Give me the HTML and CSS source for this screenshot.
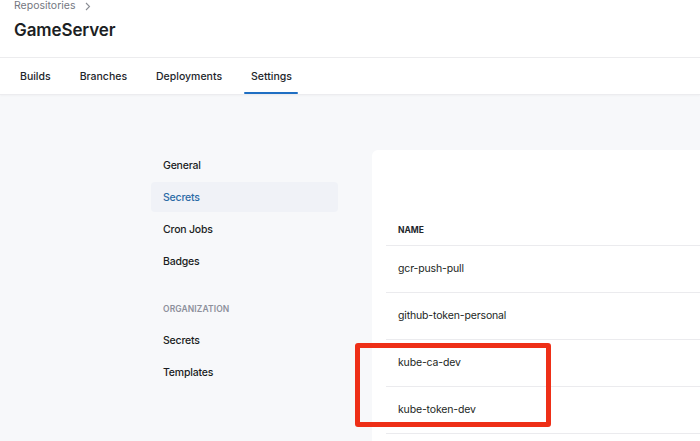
FILE: index.html
```html
<!DOCTYPE html>
<html>
<head>
<meta charset="utf-8">
<link rel="stylesheet" href="styles.css">
</head>
<body>
<header class="header">
  <div class="crumbs"><span>Repositories</span><svg class="sep" width="6" height="9" viewBox="0 0 6 9"><path d="M1 1l3.5 3.5L1 8" fill="none" stroke="#8a8d94" stroke-width="1.1"/></svg></div>
  <h1 class="title">GameServer</h1>
</header>
<nav class="tabs">
  <a class="tab">Builds</a>
  <a class="tab">Branches</a>
  <a class="tab">Deployments</a>
  <a class="tab active">Settings</a>
</nav>
<main class="main">
  <aside class="side">
    <div class="item">General</div>
    <div class="item active">Secrets</div>
    <div class="item">Cron Jobs</div>
    <div class="item">Badges</div>
    <div class="label">ORGANIZATION</div>
    <div class="item">Secrets</div>
    <div class="item">Templates</div>
  </aside>
  <section class="card">
    <div class="thead">NAME</div>
    <div class="row">gcr-push-pull</div>
    <div class="row">github-token-personal</div>
    <div class="row">kube-ca-dev</div>
    <div class="row">kube-token-dev</div>
  </section>
</main>
<div class="highlight"></div>
</body>
</html>
```
FILE: styles.css
```css
* { box-sizing: border-box; }
html, body { margin: 0; }
body {
  font-family: Inter, "Noto Sans", sans-serif;
  color: #1c1f24;
  background: #f7f8fa;
  overflow: hidden;
  position: relative;
  width: 700px;
  height: 441px;
}
.header {
  background: #fff;
  height: 58px;
  padding: 0 14px;
  border-bottom: 1px solid #ececee;
}
.crumbs {
  font-size: 10.5px;
  color: #74777f;
  line-height: 12px;
  height: 12px;
  display: flex;
  align-items: center;
  gap: 9px;
}
.title {
  margin: 7px 0 0;
  font-size: 17px;
  font-weight: 600;
  letter-spacing: -0.1px;
  line-height: 22px;
}
.tabs {
  background: #fff;
  height: 37px;
  display: flex;
  padding-left: 20px;
  border-bottom: 1px solid #ececef;
  box-shadow: 0 1px 2px rgba(0,0,0,0.03);
}
.tab {
  font-size: 10.5px;
  font-weight: 500;
  color: #22252b;
  line-height: 35px;
  padding-top: 1px;
  margin-right: 29px;
  position: relative;
}
.tab.active::after {
  content: "";
  position: absolute;
  left: -7px;
  right: -6px;
  bottom: 0;
  height: 2px;
  background: #1f6fc3;
  border-radius: 1px;
}
.main {
  display: flex;
  padding: 55px 0 0 151px;
  gap: 34px;
}
.side {
  width: 187px;
  flex: none;
}
.item {
  height: 30px;
  margin-bottom: 2px;
  border-radius: 4px;
  padding-left: 12px;
  font-size: 10.5px;
  letter-spacing: -0.2px;
  font-weight: 500;
  line-height: 31px;
  color: #1a1d22;
}
.item.active {
  background: #f0f2f7;
  color: #2b6aa6;
}
.label {
  font-size: 8.5px;
  font-weight: 600;
  color: #8d909c;
  padding: 25px 0 10px 12px;
  letter-spacing: 0.1px;
  line-height: 12px;
}
.card {
  width: 500px;
  flex: none;
  background: #fff;
  border-radius: 6px;
  padding: 64px 0 0 14px;
  height: 320px;
}
.thead {
  height: 32px;
  line-height: 32px;
  padding-left: 12px;
  font-size: 8.5px;
  font-weight: 700;
  color: #22252b;
  border-bottom: 1px solid #ebebee;
}
.row {
  height: 47px;
  line-height: 45px;
  padding-left: 12px;
  font-size: 10.5px;
  letter-spacing: -0.15px;
  color: #1c1f24;
  border-bottom: 1px solid #ebebee;
}
.highlight {
  position: absolute;
  left: 355px;
  top: 343px;
  width: 196px;
  height: 84px;
  border: 5px solid #ee2f17;
  border-radius: 3px;
}
```
